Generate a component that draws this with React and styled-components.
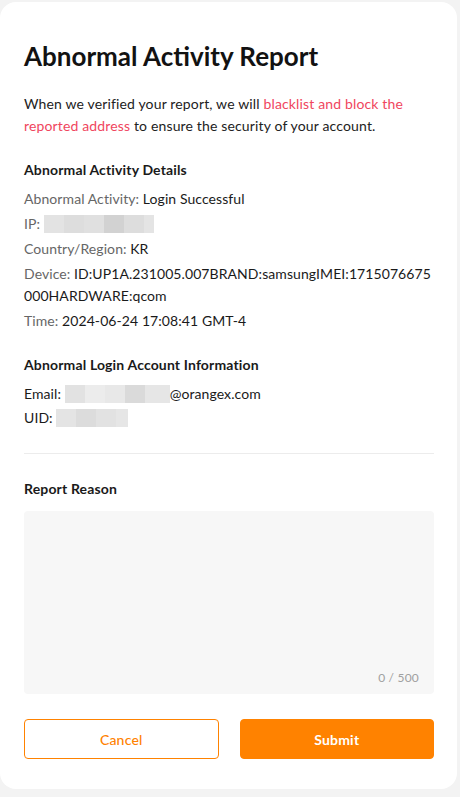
import React from "react";
import styled, { createGlobalStyle } from "styled-components";

const GlobalStyle = createGlobalStyle`
  html, body {
    margin: 0;
    padding: 0;
    background: #f3f3f3;
  }
  body {
    font-family: Lato, "Noto Sans", sans-serif;
    color: #1a1a1a;
  }
`;

const Card = styled.div`
  box-sizing: border-box;
  width: 457px;
  height: 787px;
  margin-top: 2px;
  background: #fff;
  border-radius: 16px;
  padding: 37px 23px 0 24px;
  display: flex;
  flex-direction: column;
`;

const Title = styled.h1`
  margin: 0;
  font-size: 26px;
  line-height: 34px;
  font-weight: 700;
  color: #121212;
`;

const Intro = styled.p`
  margin: 20px 0 0;
  font-size: 14px;
  line-height: 22px;
  color: #222;
  letter-spacing: 0.15px;
`;

const Highlight = styled.span`
  color: #f0465e;
`;

const SectionTitle = styled.h2`
  margin: ${(p) => p.$top || 22}px 0 ${(p) => p.$bottom ?? 7}px;
  font-size: 14px;
  line-height: 22px;
  font-weight: 700;
  color: #1a1a1a;
  letter-spacing: 0.15px;
`;

const Row = styled.div`
  font-size: 14px;
  line-height: 22px;
  margin-top: ${(p) => p.$gap ?? 3}px;
  color: #1a1a1a;
  letter-spacing: 0.08px;
  word-break: break-all;
`;

const Label = styled.span`
  color: #666;
`;

const Masked = styled.span`
  display: inline-flex;
  vertical-align: middle;
  height: 18px;
  margin-top: -3px;
`;

const MaskBlock = styled.span`
  display: inline-block;
  height: 18px;
  width: ${(p) => p.$w}px;
  background: ${(p) => p.$c};
`;

const Divider = styled.div`
  height: 1px;
  background: #ececec;
  margin: 24px 0 0;
`;

const TextBox = styled.div`
  position: relative;
  margin-top: 11px;
  height: 183px;
  background: #f7f7f7;
  border-radius: 4px;
`;

const Input = styled.textarea`
  box-sizing: border-box;
  width: 100%;
  height: 100%;
  border: none;
  outline: none;
  resize: none;
  background: transparent;
  padding: 12px 15px;
  font-family: inherit;
  font-size: 14px;
`;

const Counter = styled.span`
  position: absolute;
  right: 15px;
  bottom: 8px;
  font-size: 12px;
  line-height: 16px;
  color: #a0a0a0;
  letter-spacing: 0.2px;
`;

const Actions = styled.div`
  display: grid;
  grid-template-columns: 1fr 1fr;
  gap: 21px;
  margin-top: 25px;
`;

const Button = styled.button`
  height: 40px;
  border-radius: 4px;
  font-family: inherit;
  font-size: 14px;
  letter-spacing: 0.2px;
  cursor: pointer;
  border: 1px solid #ff8200;
  background: ${(p) => (p.$primary ? "#ff8200" : "#fff")};
  color: ${(p) => (p.$primary ? "#fff" : "#ff8200")};
  font-weight: ${(p) => (p.$primary ? 700 : 500)};
`;

const Mask = ({ blocks }) => (
  <Masked>
    {blocks.map(([w, c], i) => (
      <MaskBlock key={i} $w={w} $c={c} />
    ))}
  </Masked>
);

export default function App() {
  return (
    <>
      <GlobalStyle />
      <Card>
        <Title>Abnormal Activity Report</Title>
        <Intro>
          When we verified your report, we will{" "}
          <Highlight>blacklist and block the reported address</Highlight> to
          ensure the security of your account.
        </Intro>

        <SectionTitle>Abnormal Activity Details</SectionTitle>
        <Row $gap={0}>
          <Label>Abnormal Activity: </Label>Login Successful
        </Row>
        <Row>
          <Label>IP: </Label>
          <Mask
            blocks={[
              [20, "#e3e3e3"],
              [20, "#dddddd"],
              [20, "#e0e0e0"],
              [20, "#d2d2d2"],
              [20, "#dddddd"],
              [10, "#e4e4e4"],
            ]}
          />
        </Row>
        <Row>
          <Label>Country/Region: </Label>KR
        </Row>
        <Row>
          <Label>Device: </Label>
          ID:UP1A.231005.007BRAND:samsungIMEI:1715076675000HARDWARE:qcom
        </Row>
        <Row>
          <Label>Time: </Label>2024-06-24 17:08:41 GMT-4
        </Row>

        <SectionTitle>Abnormal Login Account Information</SectionTitle>
        <Row $gap={0}>
          Email:{" "}
          <Mask
            blocks={[
              [20, "#e2e2e2"],
              [20, "#ececec"],
              [20, "#e8e8e8"],
              [20, "#dadada"],
              [25, "#e6e6e6"],
            ]}
          />
          @orangex.com
        </Row>
        <Row $gap={2}>
          UID:{" "}
          <Mask
            blocks={[
              [20, "#e4e4e4"],
              [20, "#dcdcdc"],
              [20, "#e2e2e2"],
              [12, "#e6e6e6"],
            ]}
          />
        </Row>

        <Divider />

        <SectionTitle $top={24} $bottom={0}>
          Report Reason
        </SectionTitle>
        <TextBox>
          <Input maxLength={500} />
          <Counter>0 / 500</Counter>
        </TextBox>

        <Actions>
          <Button>Cancel</Button>
          <Button $primary>Submit</Button>
        </Actions>
      </Card>
    </>
  );
}
